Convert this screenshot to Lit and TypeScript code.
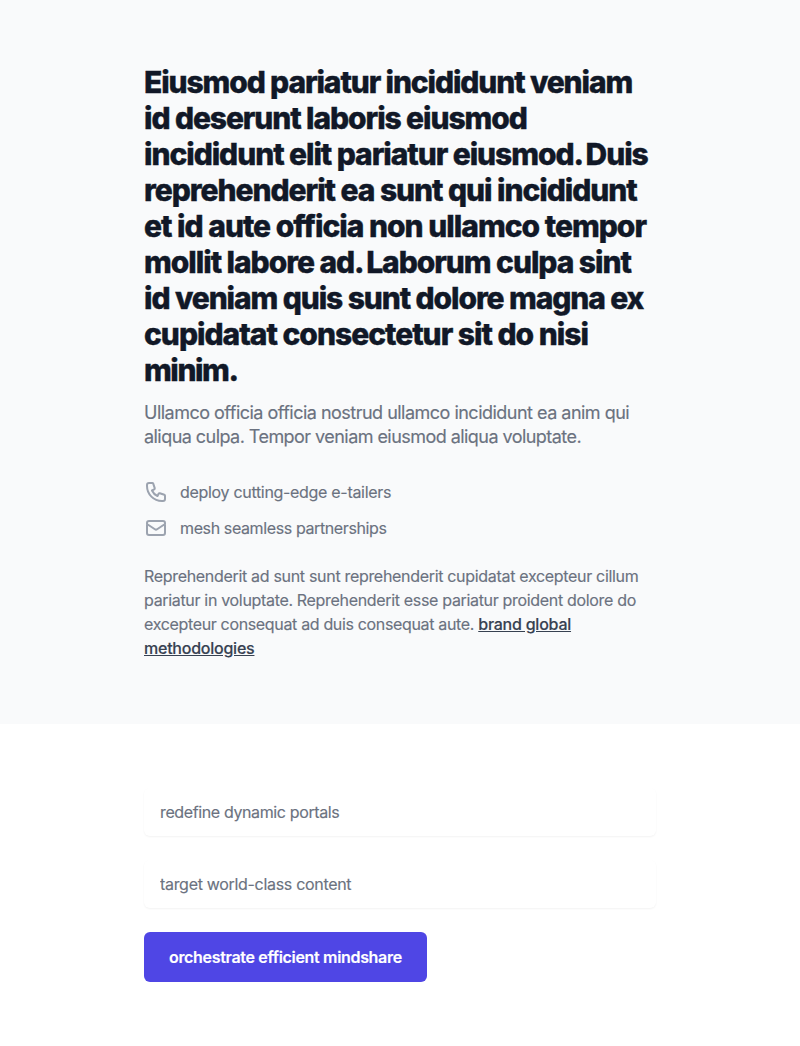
import { LitElement, html, css } from "lit";
import { customElement } from "lit/decorators.js";
import { styleMap } from "lit/directives/style-map.js";

/** A run of text with its tracking in pixels. */
type Run = [text: string, tracking: number];

const track = (px: number) => styleMap({ letterSpacing: `${px}px` });

@customElement("app-root")
export class AppRoot extends LitElement {
  static styles = css`
    :host {
      display: block;
      min-height: 1046px;
      background: #fff;
      font-family: Inter, "Liberation Sans", sans-serif;
      font-size: 16px;
      line-height: 24px;
      color: #6b7280;
      -webkit-text-stroke-width: 0.15px;
      -webkit-font-smoothing: antialiased;
    }
    * { box-sizing: border-box; margin: 0; }
    .intro { background: #f9fafb; padding: 64px 144px; height: 724px; }
    h2 {
      font-size: 30px;
      line-height: 36px;
      font-weight: 800;
      color: #111827;
      -webkit-text-stroke: 0.4px #111827;
    }
    .line { display: block; white-space: nowrap; }
    .stop { letter-spacing: -1.9px; }
    .lead { padding-top: 13px; font-size: 18px; }
    .contact { display: flex; align-items: center; margin-top: 12px; }
    .contact.first { margin-top: 31px; }
    .contact svg { width: 24px; height: 24px; color: #9ca3af; margin-right: 12px; flex: none; }
    .note { margin-top: 24px; }
    a { color: #374151; font-weight: 500; text-decoration: underline; letter-spacing: -0.24px; }
    form { padding: 64px 144px; display: grid; gap: 24px; justify-items: start; }
    input {
      display: block;
      width: 100%;
      height: 48px;
      padding: 12px 16px;
      border: 0;
      border-radius: 6px;
      background: #fff;
      box-shadow: 0 1px 2px 0 rgba(0, 0, 0, 0.05);
      font: inherit;
      outline: none;
    }
    input::placeholder { color: #6b7280; opacity: 1; }
    button {
      height: 50px;
      padding: 0 25px;
      border: 0;
      border-radius: 6px;
      background: #4f46e5;
      color: #fff;
      font: inherit;
      font-weight: 600;
      letter-spacing: -0.32px;
      white-space: nowrap;
    }
  `;

  private headline: Run[] = [
    ["Eiusmod pariatur incididunt veniam", -1.13],
    ["id deserunt laboris eiusmod", -1.1],
    ["incididunt elit pariatur eiusmod. Duis", -1.07],
    ["reprehenderit ea sunt qui incididunt", -1.05],
    ["et id aute officia non ullamco tempor", -1],
    ["mollit labore ad. Laborum culpa sint", -1.05],
    ["id veniam quis sunt dolore magna ex", -1.1],
    ["cupidatat consectetur sit do nisi", -1.01],
    ["minim.", -1.45],
  ];

  private lead: Run[] = [
    ["Ullamco officia officia nostrud ullamco incididunt ea anim qui", -0.515],
    ["aliqua culpa. Tempor veniam eiusmod aliqua voluptate.", -0.55],
  ];

  private fields: Run[] = [
    ["redefine dynamic portals", -0.375],
    ["target world-class content", -0.31],
  ];

  private line([text, px]: Run) {
    return html`<span class="line" style=${track(px)}>${text}</span>`;
  }

  /** Headline line, with a tighter gap after a full stop. */
  private headlineLine([text, px]: Run) {
    const [before, after] = text.split(". ");
    return after
      ? html`<span class="line" style=${track(px)}>${before}<span class="stop">. </span>${after}</span>`
      : this.line([text, px]);
  }

  render() {
    return html`
      <section class="intro">
        <h2>${this.headline.map((r) => this.headlineLine(r))}</h2>
        <p class="lead">${this.lead.map((r) => this.line(r))}</p>
        <div class="contact first">
          <svg fill="none" viewBox="0 0 24 24" stroke="currentColor" stroke-width="2" stroke-linecap="round" stroke-linejoin="round">
            <path d="M3 5a2 2 0 012-2h3.28a1 1 0 01.948.684l1.498 4.493a1 1 0 01-.502 1.21l-2.257 1.13a11.042 11.042 0 005.516 5.516l1.13-2.257a1 1 0 011.21-.502l4.493 1.498a1 1 0 01.684.949V19a2 2 0 01-2 2h-1C9.716 21 3 14.284 3 6V5z" />
          </svg>
          ${this.line(["deploy cutting-edge e-tailers", -0.31])}
        </div>
        <div class="contact">
          <svg fill="none" viewBox="0 0 24 24" stroke="currentColor" stroke-width="2" stroke-linecap="round" stroke-linejoin="round">
            <path d="M3 8l7.89 5.26a2 2 0 002.22 0L21 8M5 19h14a2 2 0 002-2V7a2 2 0 00-2-2H5a2 2 0 00-2 2v10a2 2 0 002 2z" />
          </svg>
          ${this.line(["mesh seamless partnerships", -0.385])}
        </div>
        <p class="note">
          ${this.line(["Reprehenderit ad sunt sunt reprehenderit cupidatat excepteur cillum", -0.315])}
          ${this.line(["pariatur in voluptate. Reprehenderit esse pariatur proident dolore do", -0.325])}
          <span class="line" style=${track(-0.34)}>excepteur consequat ad duis consequat aute. <a>brand global</a></span>
          <span class="line"><a>methodologies</a></span>
        </p>
      </section>
      <form>
        ${this.fields.map(([text, px]) => html`<input type="text" placeholder=${text} style=${track(px)} />`)}
        <button type="button">orchestrate efficient mindshare</button>
      </form>
    `;
  }
}
